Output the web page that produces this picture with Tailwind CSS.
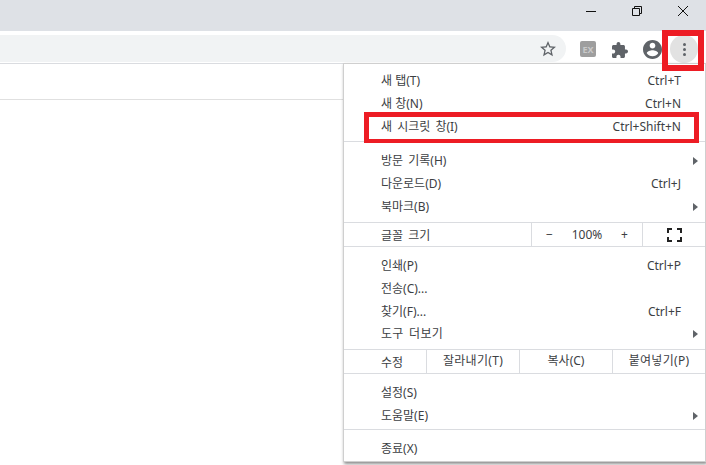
<!DOCTYPE html>
<html lang="ko">
<head>
  <meta charset="UTF-8">
  <title>Chrome menu</title>
  <script src="https://cdn.jsdelivr.net/npm/@tailwindcss/browser@4"></script>
</head>
<body class="relative w-[706px] h-[465px] overflow-hidden bg-white font-['Noto_Sans','Noto_Sans_CJK_KR',sans-serif] text-[12px] text-[#3c4043]">
  <!-- title bar -->
  <div class="h-[31px] bg-[#dee1e6] flex justify-end pt-[5px]">
    <div class="w-[46px] h-[12px] flex justify-center">
      <svg width="12" height="12" viewBox="0 0 12 12"><path d="M1 6.500h10" stroke="#111" stroke-width="1"/></svg>
    </div>
    <div class="w-[46px] h-[12px] flex justify-center">
      <svg width="12" height="12" viewBox="0 0 12 12" fill="none" stroke="#111"><path d="M1.500 3.500h7v7h-7z"/><path d="M3.500 3.500v-2h7v7h-2"/></svg>
    </div>
    <div class="w-[46px] h-[12px] flex justify-center">
      <svg width="12" height="12" viewBox="0 0 12 12" stroke="#111"><path d="M1 1l10 10M11 1L1 11"/></svg>
    </div>
  </div>
  <!-- toolbar -->
  <div class="h-[33px] bg-white border-b border-[#dadce0] flex items-start">
    <div class="w-[566px] h-[27px] mt-[4px] bg-[#f1f3f4] rounded-r-full flex items-center justify-end pr-[10px]">
      <svg width="16" height="16" viewBox="2 2 20 20" fill="#5f6368"><path d="M22 9.240l-7.190-.62L12 2 9.190 8.630 2 9.240l5.460 4.730L5.820 21 12 17.270 18.180 21l-1.630-7.030L22 9.240zM12 15.400l-3.760 2.270 1-4.280-3.320-2.880 4.380-.38L12 6.100l1.710 4.040 4.380.38-3.320 2.880 1 4.280L12 15.400z"/></svg>
    </div>
    <div class="w-[16px] h-[16px] mt-[10px] ml-[14px] rounded-[2px] bg-[#9e9e9e] flex items-center justify-center text-[9px] font-bold leading-none text-[#c9c9c9]">EX</div>
    <svg class="mt-[11px] ml-[16px]" width="16" height="16" viewBox="2 1 21 21" fill="#5f6368"><path d="M20.500 11H19V7c0-1.100-.9-2-2-2h-4V3.500C13 2.120 11.880 1 10.500 1S8 2.120 8 3.500V5H4c-1.100 0-1.990.9-1.990 2v3.800H3.500c1.490 0 2.700 1.210 2.700 2.700s-1.210 2.700-2.700 2.700H2V20c0 1.100.9 2 2 2h3.800v-1.500c0-1.490 1.210-2.700 2.700-2.700 1.490 0 2.700 1.210 2.700 2.700V22H17c1.100 0 2-.9 2-2v-4h1.500c1.380 0 2.500-1.120 2.500-2.500S21.880 11 20.500 11z"/></svg>
    <svg class="mt-[9px] ml-[15px]" width="19" height="19" viewBox="2 2 20 20" fill="#5f6368"><path d="M12 2C6.480 2 2 6.480 2 12s4.480 10 10 10 10-4.480 10-10S17.520 2 12 2zm0 3c1.660 0 3 1.340 3 3s-1.340 3-3 3-3-1.340-3-3 1.340-3 3-3zm0 14.200c-2.500 0-4.710-1.280-6-3.220.03-1.990 4-3.080 6-3.080 1.990 0 5.970 1.090 6 3.080-1.290 1.940-3.500 3.220-6 3.220z"/></svg>
    <div class="ml-[8px] w-[28px] h-[28px] mt-[4px] rounded-full bg-[#e2e2e2] flex flex-col items-center justify-center gap-[2px]">
      <span class="w-[3px] h-[3px] rounded-full bg-[#5f6368]"></span>
      <span class="w-[3px] h-[3px] rounded-full bg-[#5f6368]"></span>
      <span class="w-[3px] h-[3px] rounded-full bg-[#5f6368]"></span>
    </div>
  </div>
  <!-- page -->
  <div class="h-[36px] border-b border-[#e0e0e0]"></div>

  <!-- chrome menu -->
  <div class="absolute left-[343px] top-[63px] w-[363px] h-[399px] bg-white border border-[#cfcfcf] shadow-[1px_2px_3px_rgba(0,0,0,0.45)] pt-[5px]">
    <div class="h-[23px] flex items-center justify-between pl-[37px] pr-[24px]"><span>새 탭(T)</span><span>Ctrl+T</span></div>
    <div class="h-[23px] flex items-center justify-between pl-[37px] pr-[24px]"><span>새 창(N)</span><span>Ctrl+N</span></div>
    <div class="h-[23px] flex items-center justify-between pl-[37px] pr-[24px]"><span class="[word-spacing:2px]">새 시크릿 창(I)</span><span>Ctrl+Shift+N</span></div>
    <div class="h-px mt-[3px] mb-[7px] bg-[#dadce0]"></div>
    <div class="h-[23px] flex items-center justify-between pl-[37px] pr-[7px]"><span class="[word-spacing:2px]">방문 기록(H)</span><span class="border-y-[4px] border-l-[5px] border-y-transparent border-l-[#5f6368]"></span></div>
    <div class="h-[23px] flex items-center justify-between pl-[37px] pr-[24px]"><span>다운로드(D)</span><span>Ctrl+J</span></div>
    <div class="h-[23px] flex items-center justify-between pl-[37px] pr-[7px]"><span>북마크(B)</span><span class="border-y-[4px] border-l-[5px] border-y-transparent border-l-[#5f6368]"></span></div>
    <div class="h-[25px] mt-[4px] border-y border-[#dadce0] flex items-center">
      <span class="w-[187px] pl-[37px] pt-[2px] [word-spacing:2px]">글꼴 크기</span>
      <div class="w-[112px] h-full border-x border-[#dadce0] flex items-center justify-between px-[14px]"><span>−</span><span>100%</span><span>+</span></div>
      <div class="flex-1 flex justify-center">
        <svg width="15" height="14" viewBox="0 0 15 14" fill="none" stroke="#222" stroke-width="2"><path d="M1 5V1h4M10 1h4v4M14 9v4h-4M5 13H1V9"/></svg>
      </div>
    </div>
    <div class="h-[23px] mt-[7px] flex items-center justify-between pl-[37px] pr-[24px]"><span>인쇄(P)</span><span>Ctrl+P</span></div>
    <div class="h-[23px] flex items-center pl-[37px]"><span>전송(C)...</span></div>
    <div class="h-[23px] flex items-center justify-between pl-[37px] pr-[24px]"><span>찾기(F)...</span><span>Ctrl+F</span></div>
    <div class="h-[23px] flex items-center justify-between pl-[37px] pr-[7px] pb-px"><span class="[word-spacing:2px] tracking-[0.3px]">도구 더보기</span><span class="border-y-[4px] border-l-[5px] border-y-transparent border-l-[#5f6368]"></span></div>
    <div class="h-[25px] mt-[3px] border-y border-[#dadce0] flex items-center">
      <span class="w-[82px] pl-[37px] pt-[3px]">수정</span>
      <div class="w-[93px] h-full border-l border-[#dadce0] flex items-center justify-center pb-px tracking-[0.3px]">잘라내기(T)</div>
      <div class="w-[93px] h-full border-l border-[#dadce0] flex items-center justify-center pb-px">복사(C)</div>
      <div class="flex-1 h-full border-l border-[#dadce0] flex items-center justify-center pb-px tracking-[0.3px]">붙여넣기(P)</div>
    </div>
    <div class="h-[23px] mt-[7px] flex items-center pl-[37px]"><span>설정(S)</span></div>
    <div class="h-[23px] flex items-center justify-between pl-[37px] pr-[7px]"><span>도움말(E)</span><span class="border-y-[4px] border-l-[5px] border-y-transparent border-l-[#5f6368]"></span></div>
    <div class="h-px mt-[2px] mb-[7px] bg-[#dadce0]"></div>
    <div class="h-[23px] flex items-center pl-[37px]"><span>종료(X)</span></div>
  </div>

  <!-- red highlight boxes -->
  <div class="absolute left-[662px] top-[30px] w-[42px] h-[41px] border-[6px] border-[#ed1c24]"></div>
  <div class="absolute left-[364px] top-[112px] w-[335px] h-[31px] border-[5px] border-b-[4px] border-[#ed1c24]"></div>
</body>
</html>
